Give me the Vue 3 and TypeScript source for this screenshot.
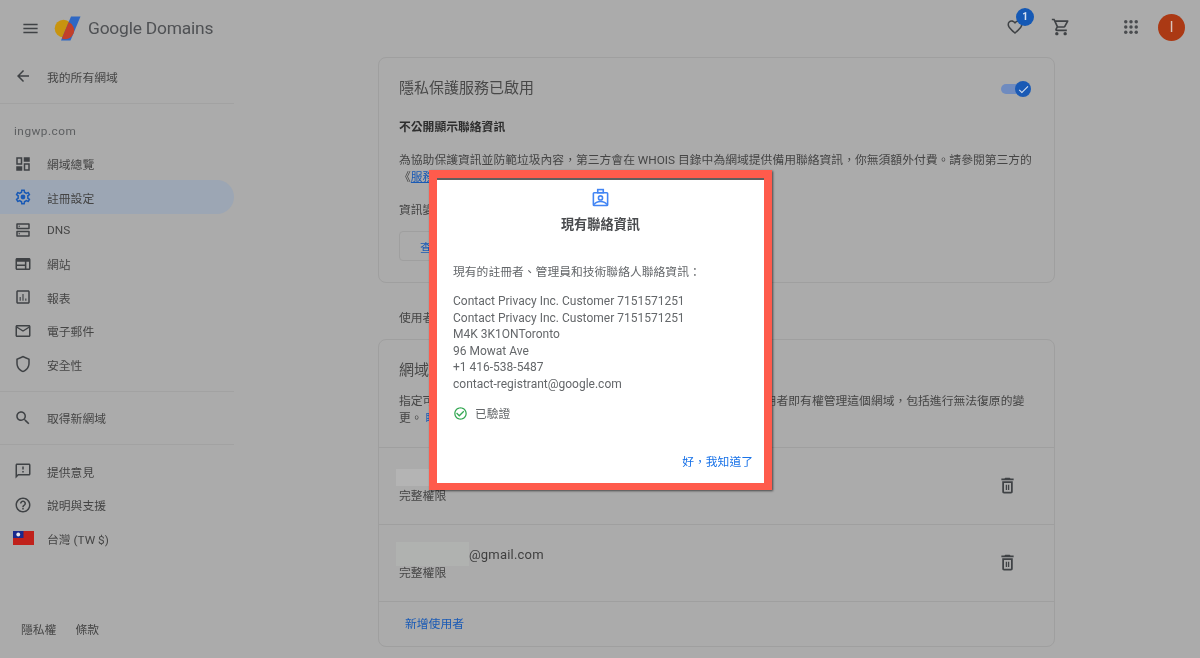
<script setup lang="ts">
interface NavItem {
  label: string
  icon: string
  active?: boolean
}

const mainNav: NavItem[] = [
  { label: '網域總覽', icon: 'M3 3h8v10H3zM5 5v6h4V5zM13 3h8v6h-8zM3 15h8v6H3zM13 11h8v10h-8zM15 13v6h4v-6z' },
  {
    label: '註冊設定',
    active: true,
    icon: 'M19.43 12.98c.04-.32.07-.64.07-.98 0-.34-.03-.66-.07-.98l2.11-1.65c.19-.15.24-.42.12-.64l-2-3.46c-.09-.16-.26-.25-.44-.25-.06 0-.12.01-.17.03l-2.49 1c-.52-.4-1.08-.73-1.69-.98l-.38-2.65C14.46 2.18 14.25 2 14 2h-4c-.25 0-.46.18-.49.42l-.38 2.65c-.61.25-1.17.59-1.69.98l-2.49-1c-.06-.02-.12-.03-.18-.03-.17 0-.34.09-.43.25l-2 3.46c-.13.22-.07.49.12.64l2.11 1.65c-.04.32-.07.65-.07.98 0 .33.03.66.07.98l-2.11 1.65c-.19.15-.24.42-.12.64l2 3.46c.09.16.26.25.44.25.06 0 .12-.01.17-.03l2.49-1c.52.4 1.08.73 1.69.98l.38 2.65c.03.24.24.42.49.42h4c.25 0 .46-.18.49-.42l.38-2.65c.61-.25 1.17-.59 1.69-.98l2.49 1c.06.02.12.03.18.03.17 0 .34-.09.43-.25l2-3.46c.12-.22.07-.49-.12-.64l-2.11-1.65zm-1.98-1.71c.04.31.05.52.05.73 0 .21-.02.43-.05.73l-.14 1.13.89.7 1.08.84-.7 1.21-1.27-.51-1.04-.42-.9.68c-.43.32-.84.56-1.25.73l-1.06.43-.16 1.13-.2 1.35h-1.4l-.19-1.35-.16-1.13-1.06-.43c-.43-.18-.83-.41-1.23-.71l-.91-.7-1.06.43-1.27.51-.7-1.21 1.08-.84.89-.7-.14-1.13c-.03-.31-.05-.54-.05-.74s.02-.43.05-.73l.14-1.13-.89-.7-1.08-.84.7-1.21 1.27.51 1.04.42.9-.68c.43-.32.84-.56 1.25-.73l1.06-.43.16-1.13.2-1.35h1.39l.19 1.35.16 1.13 1.06.43c.43.18.83.41 1.23.71l.91.7 1.06-.43 1.27-.51.7 1.21-1.07.85-.89.7.14 1.13zM12 8.8a3.2 3.2 0 1 0 0 6.4 3.2 3.2 0 0 0 0-6.4z',
  },
  {
    label: 'DNS',
    icon: 'M19 15v4H5v-4h14m1-2H4c-.55 0-1 .45-1 1v6c0 .55.45 1 1 1h16c.55 0 1-.45 1-1v-6c0-.55-.45-1-1-1zM7 18c-.55 0-1-.45-1-1s.45-1 1-1 1 .45 1 1-.45 1-1 1zM19 5v4H5V5h14m1-2H4c-.55 0-1 .45-1 1v6c0 .55.45 1 1 1h16c.55 0 1-.45 1-1V4c0-.55-.45-1-1-1zM7 8c-.55 0-1-.45-1-1s.45-1 1-1 1 .45 1 1-.45 1-1 1z',
  },
  {
    label: '網站',
    icon: 'M20 4H4c-1.1 0-1.99.9-1.99 2L2 18c0 1.1.9 2 2 2h16c1.1 0 2-.9 2-2V6c0-1.1-.9-2-2-2zM4 9h10.5v3.5H4V9zm0 5.5h10.5V18H4v-3.5zM20 18h-3.5V9H20v9z',
  },
  {
    label: '報表',
    icon: 'M19 3H5c-1.1 0-2 .9-2 2v14c0 1.1.9 2 2 2h14c1.1 0 2-.9 2-2V5c0-1.1-.9-2-2-2zm0 16H5V5h14v14zM7.5 12H9v5H7.5zm3.75-4h1.5v9h-1.5zm3.75 6h1.5v3H15z',
  },
  {
    label: '電子郵件',
    icon: 'M20 4H4c-1.1 0-1.99.9-1.99 2L2 18c0 1.1.9 2 2 2h16c1.1 0 2-.9 2-2V6c0-1.1-.9-2-2-2zm0 14H4V8l8 5 8-5v10zm-8-7L4 6h16l-8 5z',
  },
  {
    label: '安全性',
    icon: 'M12 1L3 5v6c0 5.55 3.84 10.74 9 12 5.16-1.26 9-6.45 9-12V5l-9-4zm7 10c0 4.52-2.98 8.69-7 9.93-4.02-1.24-7-5.41-7-9.93V6.3l7-3.11 7 3.11V11z',
  },
]

const searchIcon =
  'M15.5 14h-.79l-.28-.27C15.41 12.59 16 11.11 16 9.5 16 5.91 13.09 3 9.5 3S3 5.91 3 9.5 5.91 16 9.5 16c1.61 0 3.09-.59 4.23-1.57l.27.28v.79l5 4.99L20.49 19l-4.99-5zm-6 0C7.01 14 5 11.99 5 9.5S7.01 5 9.5 5 14 7.01 14 9.5 11.99 14 9.5 14z'

const supportNav: NavItem[] = [
  {
    label: '提供意見',
    icon: 'M20 2H4c-1.1 0-1.99.9-1.99 2L2 22l4-4h14c1.1 0 2-.9 2-2V4c0-1.1-.9-2-2-2zm0 14H5.17L4 17.17V4h16v12zm-9-4h2v2h-2zm0-6h2v4h-2z',
  },
  {
    label: '說明與支援',
    icon: 'M11 18h2v-2h-2v2zm1-16C6.48 2 2 6.48 2 12s4.48 10 10 10 10-4.48 10-10S17.52 2 12 2zm0 18c-4.41 0-8-3.59-8-8s3.59-8 8-8 8 3.59 8 8-3.59 8-8 8zm0-14c-2.21 0-4 1.79-4 4h2c0-1.1.9-2 2-2s2 .9 2 2c0 2-3 1.75-3 5h2c0-2.25 3-2.5 3-5 0-2.21-1.79-4-4-4z',
  },
]

const contactLines = [
  'Contact Privacy Inc. Customer 7151571251',
  'Contact Privacy Inc. Customer 7151571251',
  'M4K 3K1ONToronto',
  '96 Mowat Ave',
  '+1 416-538-5487',
  'contact-registrant@google.com',
]
const trashIcon =
  'M6 19c0 1.1.9 2 2 2h8c1.1 0 2-.9 2-2V7H6v12zM8 9h8v10H8V9zm7.5-5l-1-1h-5l-1 1H5v2h14V4h-3.5zM10 11h1.5v6H10zm2.5 0H14v6h-1.5z'
const dots = [5, 12, 19]
</script>

<template>
  <div class="page">
    <aside class="sidebar">
      <header class="brand">
        <svg class="icon menu" viewBox="0 0 24 24"><path d="M3 18h18v-2H3v2zm0-5h18v-2H3v2zm0-7v2h18V6H3z" /></svg>
        <svg class="logo" viewBox="0 0 27 25">
          <circle cx="9.5" cy="12.5" r="8.8" fill="#c8940f" />
          <path d="M17 .5h9.5L16.5 24.5H7z" fill="#2f68c4" />
          <path d="M14.7 6.1 7.8 22.5A8.8 8.8 0 0 0 14.7 6.1z" fill="#c2402a" />
        </svg>
        <span class="brand-name">Google Domains</span>
      </header>

      <div class="nav-row back">
        <svg class="icon" viewBox="0 0 24 24"><path d="M20 11H7.83l5.59-5.59L12 4l-8 8 8 8 1.41-1.41L7.83 13H20v-2z" /></svg>
        <span>我的所有網域</span>
      </div>
      <hr class="rule" />

      <div class="domain">ingwp.com</div>
      <nav>
        <div v-for="item in mainNav" :key="item.label" class="nav-row" :class="{ active: item.active }">
          <svg class="icon" viewBox="0 0 24 24"><path :d="item.icon" /></svg>
          <span>{{ item.label }}</span>
        </div>
      </nav>
      <hr class="rule section" />

      <nav class="group">
        <div class="nav-row">
          <svg class="icon" viewBox="0 0 24 24"><path :d="searchIcon" /></svg>
          <span>取得新網域</span>
        </div>
      </nav>
      <hr class="rule section" />

      <nav class="group">
        <div v-for="item in supportNav" :key="item.label" class="nav-row">
          <svg class="icon" viewBox="0 0 24 24"><path :d="item.icon" /></svg>
          <span>{{ item.label }}</span>
        </div>
        <div class="nav-row">
          <svg class="flag" viewBox="0 0 21 14">
            <rect width="21" height="14" fill="#c0211b" />
            <rect width="10.5" height="7" fill="#1a2a8c" />
            <circle cx="5.25" cy="3.5" r="1.9" fill="#e8e8ee" />
          </svg>
          <span>台灣 (TW $)</span>
        </div>
      </nav>

      <footer class="side-foot">
        <span>隱私權</span>
        <span>條款</span>
      </footer>
    </aside>

    <div class="column">
      <div class="topbar">
        <div class="heart">
          <svg class="icon" viewBox="0 0 24 24"><path d="M16.5 3c-1.74 0-3.41.81-4.5 2.09C10.91 3.81 9.24 3 7.5 3 4.42 3 2 5.42 2 8.5c0 3.78 3.4 6.86 8.55 11.54L12 21.35l1.45-1.32C18.6 15.36 22 12.28 22 8.5 22 5.42 19.58 3 16.5 3zm-4.4 15.55l-.1.1-.1-.1C7.14 14.24 4 11.39 4 8.5 4 6.5 5.5 5 7.5 5c1.54 0 3.04.99 3.57 2.36h1.87C13.46 5.99 14.96 5 16.5 5c2 0 3.5 1.5 3.5 3.5 0 2.89-3.14 5.74-7.9 10.05z" /></svg>
          <span class="badge">1</span>
        </div>
        <svg class="icon cart" viewBox="0 0 24 24"><path d="M15.55 13c.75 0 1.41-.41 1.75-1.03l3.58-6.49c.37-.66-.11-1.48-.87-1.48H5.21l-.94-2H1v2h2l3.6 7.59-1.35 2.44C4.52 15.37 5.48 17 7 17h12v-2H7l1.1-2h7.45zM6.16 6h12.15l-2.76 5H8.53L6.16 6zM7 18c-1.1 0-1.99.9-1.99 2S5.9 22 7 22s2-.9 2-2-.9-2-2-2zm10 0c-1.1 0-1.99.9-1.99 2s.89 2 1.99 2 2-.9 2-2-.9-2-2-2z" /></svg>
        <svg class="apps" viewBox="0 0 24 24">
          <template v-for="y in dots" :key="y">
            <circle v-for="x in dots" :key="x" :cx="x" :cy="y" r="2.3" />
          </template>
        </svg>
        <div class="avatar">I</div>
      </div>

      <main class="content">
        <section class="card privacy">
          <div class="card-head">
            <h2>隱私保護服務已啟用</h2>
            <div class="toggle">
              <span class="knob">
                <svg viewBox="0 0 24 24"><path d="M9 16.17 4.83 12l-1.42 1.41L9 19 21 7l-1.41-1.41z" /></svg>
              </span>
            </div>
          </div>
          <h3>不公開顯示聯絡資訊</h3>
          <p>為協助保護資訊並防範垃圾內容，第三方會在 WHOIS 目錄中為網域提供備用聯絡資訊，你無須額外付費。請參閱第三方的<br />《<a>服務條款</a>》。</p>
          <p class="note">資訊變更後可能需要一段時間才會生效。</p>
          <button class="outline-btn">查看聯絡資訊</button>
        </section>

        <div class="users-intro">使用者可以存取這個網域</div>

        <section class="card users">
          <div class="users-head">
            <h2>網域權限</h2>
            <p>指定可以存取這個網域的使用者，並設定各自權限。具備完整權限的使用者即有權管理這個網域，包括進行無法復原的變更。 <a>瞭解詳情</a></p>
          </div>
          <div class="user-row">
            <div class="user-info">
              <div class="user-mail"><span class="redact short"></span></div>
              <div class="role">完整權限</div>
            </div>
            <svg class="icon trash" viewBox="0 0 24 24"><path :d="trashIcon" /></svg>
          </div>
          <div class="user-row">
            <div class="user-info">
              <div class="user-mail"><span class="redact"></span>@gmail.com</div>
              <div class="role">完整權限</div>
            </div>
            <svg class="icon trash" viewBox="0 0 24 24"><path :d="trashIcon" /></svg>
          </div>
          <div class="add-row"><a>新增使用者</a></div>
        </section>
      </main>
    </div>

    <div class="dialog">
      <div class="dialog-head">
        <svg viewBox="0 0 24 24" class="badge-icon">
          <rect x="3" y="6" width="18" height="16" rx="1" />
          <rect x="8.5" y="2" width="7" height="4" />
          <circle cx="12" cy="12.5" r="2.6" />
          <path d="M4 21c1.5-3 4.500-4 8-4s6.500 1 8 4" />
        </svg>
        <h2>現有聯絡資訊</h2>
      </div>
      <p class="dialog-lead">現有的註冊者、管理員和技術聯絡人聯絡資訊：</p>
      <div class="address">
        <div v-for="(line, i) in contactLines" :key="i">{{ line }}</div>
      </div>
      <div class="verified">
        <svg viewBox="0 0 24 24"><path d="M16.59 7.58L10 14.17l-3.59-3.58L5 12l5 5 8-8zM12 2C6.48 2 2 6.48 2 12s4.48 10 10 10 10-4.48 10-10S17.52 2 12 2zm0 18c-4.42 0-8-3.58-8-8s3.58-8 8-8 8 3.58 8 8-3.58 8-8 8z" /></svg>
        <span>已驗證</span>
      </div>
      <div class="dialog-actions"><a>好，我知道了</a></div>
    </div>
  </div>
</template>

<style scoped>
.page {
  position: relative;
  display: flex;
  width: 1200px;
  height: 658px;
  overflow: hidden;
  background: #ababab;
  color: #454545;
  font-family: Roboto, "Noto Sans CJK TC", sans-serif;
  font-size: 11.8px;
  filter: blur(0.4px);
}

.icon {
  width: 18px;
  height: 18px;
  flex: none;
  fill: #3f4245;
}

.sidebar {
  width: 234px;
  flex: none;
  display: flex;
  flex-direction: column;
  height: 658px;
}

.brand {
  height: 56px;
  flex: none;
  display: flex;
  align-items: center;
  padding-left: 21px;
}

.menu {
  margin-right: 14px;
  width: 19px;
  height: 19px;
}

.logo {
  width: 27px;
  height: 25px;
  margin-right: 7px;
}

.brand-name {
  font-size: 17.4px;
  color: #4f5154;
  letter-spacing: -0.2px;
}

.nav-row {
  display: flex;
  align-items: center;
  height: 33.4px;
  padding-left: 14px;
  gap: 15px;
  border-radius: 0 17px 17px 0;
}

.nav-row.active {
  background: #9ca6b4;
}

.nav-row.active .icon {
  fill: #1a5ab5;
}

.back {
  height: 40px;
  margin-bottom: 7px;
}

.rule {
  width: 100%;
  height: 1px;
  margin: 0;
  border: 0;
  background: #a2a2a2;
  flex: none;
}

.rule.section {
  margin-top: 10px;
}

.group {
  padding-top: 9.3px;
}

.domain {
  height: 43px;
  padding: 20px 0 0 14px;
  box-sizing: border-box;
  letter-spacing: 0.5px;
  color: #5c5e60;
}

.flag {
  width: 21px;
  height: 14px;
  margin-left: -1px;
  margin-right: -2px;
  flex: none;
}

.side-foot {
  margin-top: auto;
  height: 38px;
  padding-left: 21px;
  display: flex;
  gap: 19px;
  line-height: 20px;
}

.column {
  flex: 1;
  min-width: 0;
  display: flex;
  flex-direction: column;
}

.topbar {
  height: 54px;
  flex: none;
  display: flex;
  align-items: center;
  padding-left: 771px;
}

.heart {
  position: relative;
  width: 18px;
  height: 18px;
  margin-left: 1px;
}

.badge {
  position: absolute;
  top: -10px;
  left: 10px;
  width: 18px;
  height: 18px;
  border-radius: 50%;
  background: #1559b5;
  color: #d8e2f2;
  font-size: 10px;
  font-weight: 700;
  line-height: 18px;
  text-align: center;
}

.cart {
  margin-left: 27px;
  width: 20px;
  height: 20px;
}

.apps {
  width: 18px;
  height: 18px;
  margin-left: 51px;
  fill: #4a4c4f;
}

.avatar {
  width: 27px;
  height: 27px;
  margin-left: 18px;
  border-radius: 50%;
  background: #ab3914;
  color: #d8c4bc;
  font-size: 15px;
  line-height: 27px;
  text-align: center;
}

.content {
  padding: 3px 0 0 144px;
}

.card {
  width: 677px;
  box-sizing: border-box;
  border: 1px solid #9f9f9f;
  border-radius: 8px;
}

.card h2 {
  margin: 0;
  font-size: 15px;
  font-weight: 400;
  line-height: 22px;
  color: #484848;
}

.privacy {
  height: 226px;
  padding: 19px 20px 0;
}

.card-head {
  display: flex;
  justify-content: space-between;
  align-items: center;
  padding-right: 3px;
}

.toggle {
  position: relative;
  width: 20px;
  height: 10px;
  margin-top: 2px;
  margin-right: 10px;
  border-radius: 5px;
  background: #6f8bbf;
}

.knob {
  position: absolute;
  top: -3px;
  left: 14px;
  width: 16px;
  height: 16px;
  border-radius: 50%;
  background: #1a5ab5;
  display: flex;
  align-items: center;
  justify-content: center;
}

.knob svg {
  width: 13px;
  height: 13px;
  fill: #d8e2f2;
}

.privacy h3 {
  margin: 20px 0 0;
  font-size: 11.8px;
  line-height: 17px;
  font-weight: 700;
  color: #2e2e2e;
}

.privacy p {
  margin: 16px 0 0;
  line-height: 17px;
  white-space: nowrap;
}

.privacy .note {
  margin-top: 16px;
}

.card a {
  color: #1a5ab5;
}

.privacy a {
  text-decoration: underline;
}

.outline-btn {
  display: block;
  height: 30px;
  margin-top: 12px;
  padding: 0 20px;
  border: 1px solid #9f9f9f;
  border-radius: 4px;
  background: transparent;
  color: #1a5ab5;
  font: inherit;
}

.users-intro {
  margin: 27px 0 0 21px;
  line-height: 17px;
}

.users {
  margin-top: 12px;
  height: 308px;
}

.users-head {
  height: 107px;
  padding: 19px 20px 0;
  box-sizing: border-box;
}

.users-head p {
  margin: 12px 0 0;
  line-height: 17px;
}

.user-row {
  height: 77px;
  box-sizing: border-box;
  border-top: 1px solid #9f9f9f;
  display: flex;
  align-items: center;
  justify-content: space-between;
  padding: 0 36px 0 20px;
}

.trash {
  width: 21px;
  height: 21px;
  margin-top: -2px;
}

.user-mail {
  display: flex;
  align-items: center;
  font-size: 13px;
  letter-spacing: 0.2px;
  height: 20px;
  color: #3f3f3f;
}

.role {
  margin-top: 1px;
  line-height: 17px;
}

.redact {
  width: 73px;
  height: 24px;
  margin-left: -3px;
  background: #b0b2b0;
}

.redact.short {
  width: 46px;
  height: 17px;
  background: #b4b4b4;
}

.add-row {
  height: 44px;
  box-sizing: border-box;
  border-top: 1px solid #9f9f9f;
  padding: 14px 26px 0;
  line-height: 17px;
}

.dialog {
  position: absolute;
  left: 429px;
  top: 170px;
  width: 343px;
  height: 320px;
  box-sizing: border-box;
  display: flex;
  flex-direction: column;
  padding: 11px 24px 0;
  background: #fff;
  border: 8px solid #ff5b4c;
  border-bottom-width: 7px;
  box-shadow: 1px 1px 2px rgba(0, 0, 0, 0.6), inset 0 2px 0 #5f5f5f;
  color: #64676a;
}

.dialog-head {
  display: flex;
  flex-direction: column;
  align-items: center;
  margin-top: -1px;
}

.badge-icon {
  width: 19px;
  height: 19px;
  fill: none;
  stroke: #4285f4;
  stroke-width: 2;
}

.dialog-head h2 {
  margin: 8px 0 0;
  font-size: 13.2px;
  line-height: 20px;
  font-weight: 700;
  color: #4a4c4f;
}

.dialog-lead {
  margin: 28px 0 0 -8px;
  line-height: 18px;
}

.address {
  margin: 12px 0 0 -8px;
  font-size: 12px;
  line-height: 16.6px;
}

.verified {
  display: flex;
  align-items: center;
  gap: 7px;
  margin: 12px 0 0 -8px;
  line-height: 18px;
}

.verified svg {
  width: 15px;
  height: 15px;
  fill: #34a853;
}

.dialog-actions {
  margin: 30px -13px 0 0;
  text-align: right;
  line-height: 18px;
}

.dialog-actions a {
  color: #1a73e8;
}
</style>
